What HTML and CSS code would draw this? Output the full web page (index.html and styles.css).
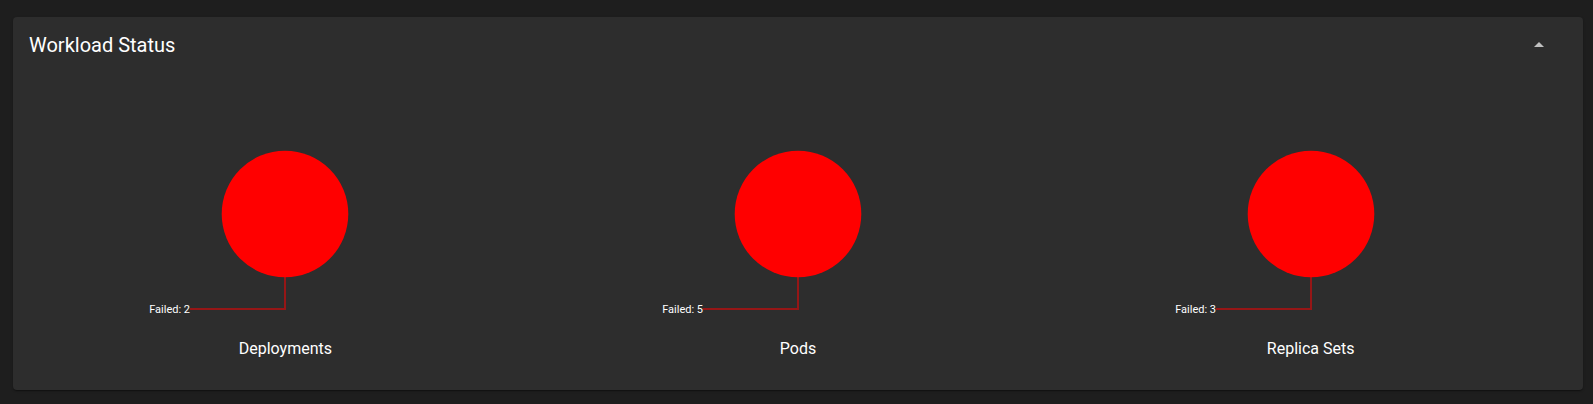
FILE: index.html
```html
<!DOCTYPE html>
<html lang="en">
<head>
<meta charset="utf-8">
<title>Workload Status</title>
<link rel="stylesheet" href="styles.css">
</head>
<body>
<main class="card">
  <header class="card-header">
    <h1 class="card-title">Workload Status</h1>
    <button class="toggle" type="button" aria-label="Collapse" aria-expanded="true">
      <svg class="toggle-icon" viewBox="0 0 24 24" aria-hidden="true"><path d="M7 14l5-5 5 5z"/></svg>
    </button>
  </header>
  <div class="charts">
    <figure class="chart">
      <svg class="pie" viewBox="0 0 400 264" role="img" aria-label="Deployments, failed: 2">
        <path class="pie-line" d="M200 204V236H105"/>
        <circle class="pie-slice" cx="200" cy="141" r="63.3"/>
        <text class="pie-label" x="105" y="240">Failed: 2</text>
      </svg>
      <figcaption class="chart-title">Deployments</figcaption>
    </figure>
    <figure class="chart">
      <svg class="pie" viewBox="0 0 400 264" role="img" aria-label="Pods, failed: 5">
        <path class="pie-line" d="M200 204V236H105"/>
        <circle class="pie-slice" cx="200" cy="141" r="63.3"/>
        <text class="pie-label" x="105" y="240">Failed: 5</text>
      </svg>
      <figcaption class="chart-title">Pods</figcaption>
    </figure>
    <figure class="chart">
      <svg class="pie" viewBox="0 0 400 264" role="img" aria-label="Replica Sets, failed: 3">
        <path class="pie-line" d="M200 204V236H105"/>
        <circle class="pie-slice" cx="200" cy="141" r="63.3"/>
        <text class="pie-label" x="105" y="240">Failed: 3</text>
      </svg>
      <figcaption class="chart-title">Replica Sets</figcaption>
    </figure>
  </div>
</main>
</body>
</html>
```
FILE: styles.css
```css
* {
  box-sizing: border-box;
}

body {
  margin: 0;
  padding: 17px 10px 14px 13px;
  background: #1e1e1e;
  color: #fff;
  font-family: Roboto, "Liberation Sans", sans-serif;
}

.card {
  padding-bottom: 29px;
  border-radius: 4px;
  background: #2d2d2d;
  box-shadow: 0 2px 1px -1px rgba(0, 0, 0, 0.2), 0 1px 1px rgba(0, 0, 0, 0.14), 0 1px 3px rgba(0, 0, 0, 0.12);
}

.card-header {
  display: flex;
  align-items: center;
  justify-content: space-between;
  height: 56px;
  padding: 0 32px 0 16px;
}

.card-title {
  margin: 0;
  font-size: 20px;
  font-weight: 400;
  line-height: 24px;
}

.toggle {
  display: flex;
  padding: 0;
  border: 0;
  background: none;
  color: #c0c0c0;
  cursor: pointer;
}

.toggle-icon {
  width: 24px;
  height: 24px;
  fill: currentColor;
}

.charts {
  display: grid;
  grid-template-columns: repeat(3, 1fr);
  padding: 0 16px;
}

.chart {
  display: flex;
  flex-direction: column;
  align-items: center;
  min-width: 0;
  margin: 0;
}

.pie {
  width: 400px;
  max-width: 100%;
}

.pie-slice {
  fill: #f00;
}

.pie-line {
  fill: none;
  stroke: #961616;
  stroke-width: 2px;
}

.pie-label {
  fill: #fff;
  font-size: 11px;
  text-anchor: end;
}

.chart-title {
  font-size: 16px;
  line-height: 24px;
}
```
